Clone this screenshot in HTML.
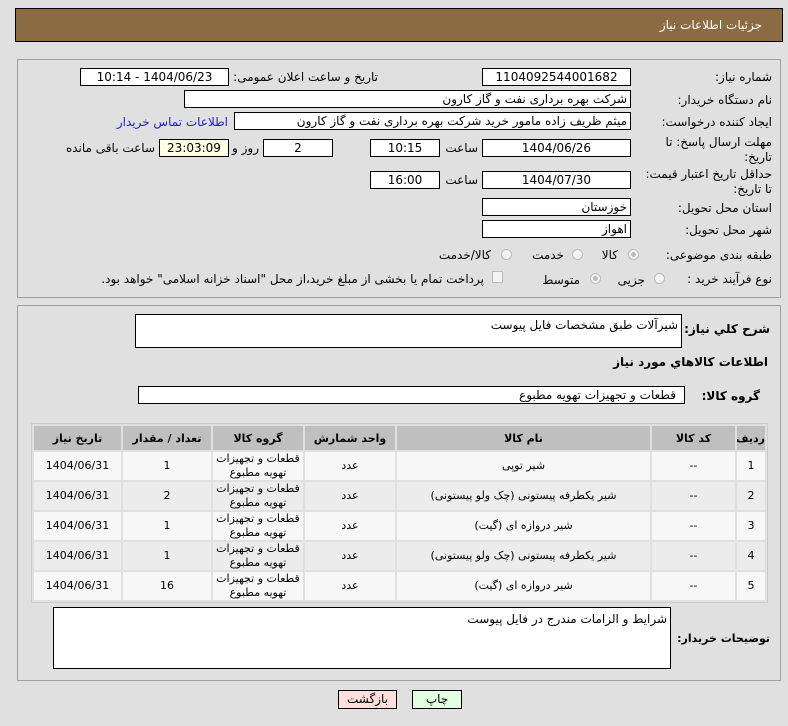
<!DOCTYPE html>
<html><head><meta charset="utf-8"><style>
body{margin:0;width:788px;height:726px;background:#e0e0e0;font-family:Tahoma,"DejaVu Sans","Liberation Sans",sans-serif;font-size:12px;color:#000;position:relative;overflow:hidden}
.a{position:absolute}
.hdr{left:15px;top:8px;width:768px;height:34px;background:#8b6b42;border:1px solid #000;box-sizing:border-box}
.hdr span{position:absolute;right:20px;top:9px;color:#fff;font-size:12px}
.pan{border:1px solid #a0a0a0;box-sizing:border-box}
.box{position:absolute;background:#fff;border:1px solid #000;box-sizing:border-box;height:18px;line-height:16px;direction:rtl;white-space:nowrap;overflow:hidden}
.c{text-align:center}
.r{text-align:right;padding-right:3px}
.l{position:absolute;direction:rtl;text-align:right;white-space:nowrap;z-index:2}
.rad{position:absolute;width:11px;height:11px;border:1px solid #bbb;border-radius:50%;background:#f4f4f4;box-sizing:border-box}
.rad.on::after{content:"";position:absolute;left:2px;top:2px;width:5px;height:5px;border-radius:50%;background:#bbb}
table{position:absolute;left:31px;top:423px;width:737px;table-layout:fixed;border-collapse:separate;border-spacing:2px;background:#e0e0e0;border:1px solid #ccc;direction:rtl}
th{background:#bfbfbf;height:24px;padding:0;font-weight:bold;font-size:11px;white-space:nowrap;overflow:hidden}
td{height:28px;padding:0;text-align:center;font-size:11px;line-height:14px;white-space:nowrap;overflow:hidden}
tr.o td{background:#f7f7f7}tr.e td{background:#ececec}
.btn{position:absolute;height:19px;border:1px solid #000;box-sizing:border-box;text-align:center;line-height:17px}
.b{font-weight:bold;font-size:12px;letter-spacing:-0.5px}
</style></head><body>
<div class="a hdr"><span>جزئیات اطلاعات نیاز</span></div>
<div class="a pan" style="left:17px;top:59px;width:764px;height:239px"></div>
<div class="a pan" style="left:17px;top:305px;width:764px;height:376px"></div>

<div class="l" style="right:16px;top:70px">شماره نیاز:</div>
<div class="box c" style="left:482px;top:68px;width:149px">1104092544001682</div>
<div class="l" style="right:410px;top:70px">تاریخ و ساعت اعلان عمومی:</div>
<div class="box c" style="left:80px;top:68px;width:149px">1404/06/23 - 10:14</div>

<div class="l" style="right:16px;top:93px">نام دستگاه خریدار:</div>
<div class="box r" style="left:184px;top:90px;width:447px">شرکت بهره برداری نفت و گاز کارون</div>

<div class="l" style="right:16px;top:115px">ایجاد کننده درخواست:</div>
<div class="box r" style="left:234px;top:112px;width:397px">میثم ظریف زاده مامور خرید شرکت بهره برداری نفت و گاز کارون</div>
<div class="l" style="right:560px;top:115px;color:#2020d0">اطلاعات تماس خریدار</div>

<div class="l" style="right:16px;top:135px;line-height:15px">مهلت ارسال پاسخ: تا<br>تاریخ:</div>
<div class="box c" style="left:482px;top:139px;width:149px">1404/06/26</div>
<div class="l" style="right:310px;top:141px">ساعت</div>
<div class="box c" style="left:370px;top:139px;width:70px">10:15</div>
<div class="box c" style="left:263px;top:139px;width:70px">2</div>
<div class="l" style="right:529px;top:141px">روز و</div>
<div class="box c" style="left:159px;top:139px;width:70px;background:#ffffe6">23:03:09</div>
<div class="l" style="right:633px;top:141px">ساعت باقی مانده</div>

<div class="l" style="right:16px;top:167px;line-height:15px">حداقل تاریخ اعتبار قیمت:<br>تا تاریخ:</div>
<div class="box c" style="left:482px;top:171px;width:149px">1404/07/30</div>
<div class="l" style="right:310px;top:173px">ساعت</div>
<div class="box c" style="left:370px;top:171px;width:70px">16:00</div>

<div class="l" style="right:16px;top:201px">استان محل تحویل:</div>
<div class="box r" style="left:482px;top:198px;width:149px">خوزستان</div>
<div class="l" style="right:16px;top:223px">شهر محل تحویل:</div>
<div class="box r" style="left:482px;top:220px;width:149px">اهواز</div>

<div class="l" style="right:16px;top:248px">طبقه بندی موضوعی:</div>
<div class="rad on" style="left:628px;top:249px"></div><div class="l" style="right:170px;top:248px">کالا</div>
<div class="rad" style="left:572px;top:249px"></div><div class="l" style="right:224px;top:248px">خدمت</div>
<div class="rad" style="left:501px;top:249px"></div><div class="l" style="right:297px;top:248px">کالا/خدمت</div>

<div class="l" style="right:16px;top:272px">نوع فرآیند خرید :</div>
<div class="rad" style="left:654px;top:273px"></div><div class="l" style="right:143px;top:273px">جزیی</div>
<div class="rad on" style="left:590px;top:273px"></div><div class="l" style="right:208px;top:273px">متوسط</div>
<div class="a" style="left:492px;top:271px;width:11px;height:12px;border:1px solid #bbb;background:#f4f4f4;box-sizing:border-box"></div>
<div class="l" style="right:304px;top:272px">پرداخت تمام یا بخشی از مبلغ خرید،از محل "اسناد خزانه اسلامی" خواهد بود.</div>

<div class="box" style="left:135px;top:314px;width:547px;height:34px;text-align:right;padding-right:3px;line-height:20px">شیرآلات طبق مشخصات فایل پیوست</div>
<div class="l b" style="right:18px;top:322px">شرح کلي نیاز:</div>
<div class="l b" style="right:20px;top:355px">اطلاعات کالاهاي مورد نیاز</div>
<div class="l b" style="right:28px;top:389px">گروه کالا:</div>
<div class="box r" style="left:138px;top:386px;width:547px;padding-right:8px">قطعات و تجهیزات تهویه مطبوع</div>

<table>
<colgroup><col style="width:28px"><col style="width:83px"><col style="width:253px"><col style="width:90px"><col style="width:90px"><col style="width:88px"><col></colgroup>
<tr><th>ردیف</th><th>کد کالا</th><th>نام کالا</th><th>واحد شمارش</th><th>گروه کالا</th><th>تعداد / مقدار</th><th>تاریخ نیاز</th></tr>
<tr class="o"><td>1</td><td>--</td><td>شیر توپی</td><td>عدد</td><td>قطعات و تجهیزات<br>تهویه مطبوع</td><td>1</td><td>1404/06/31</td></tr>
<tr class="e"><td>2</td><td>--</td><td>شیر یکطرفه پیستونی (چک ولو پیستونی)</td><td>عدد</td><td>قطعات و تجهیزات<br>تهویه مطبوع</td><td>2</td><td>1404/06/31</td></tr>
<tr class="o"><td>3</td><td>--</td><td>شیر دروازه ای (گیت)</td><td>عدد</td><td>قطعات و تجهیزات<br>تهویه مطبوع</td><td>1</td><td>1404/06/31</td></tr>
<tr class="e"><td>4</td><td>--</td><td>شیر یکطرفه پیستونی (چک ولو پیستونی)</td><td>عدد</td><td>قطعات و تجهیزات<br>تهویه مطبوع</td><td>1</td><td>1404/06/31</td></tr>
<tr class="o"><td>5</td><td>--</td><td>شیر دروازه ای (گیت)</td><td>عدد</td><td>قطعات و تجهیزات<br>تهویه مطبوع</td><td>16</td><td>1404/06/31</td></tr>
</table>

<div class="box" style="left:53px;top:607px;width:618px;height:62px;text-align:right;padding-right:3px;line-height:22px">شرایط و الزامات مندرج در فایل پیوست</div>
<div class="l b" style="right:18px;top:632px;font-size:11px">توضیحات خریدار:</div>

<div class="btn" style="left:338px;top:690px;width:59px;background:#ffdede">بازگشت</div>
<div class="btn" style="left:412px;top:690px;width:50px;background:#e2ffe2">چاپ</div>
</body></html>
